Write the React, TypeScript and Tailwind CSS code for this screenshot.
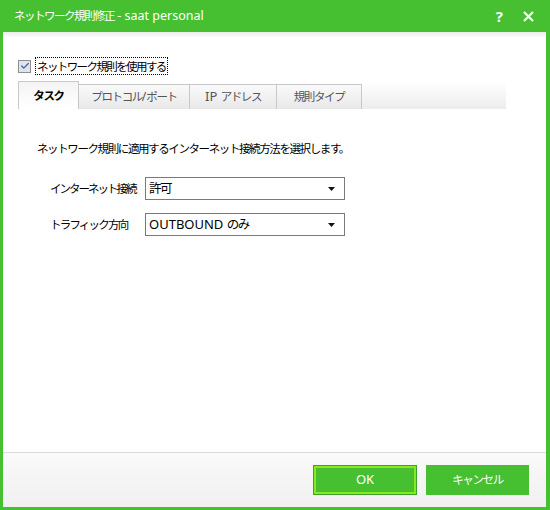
import { Check } from 'lucide-react'

const font = { fontFamily: '"Noto Sans", "Noto Sans CJK JP", sans-serif' }

// Japanese runs are narrower in the original UI font, so tighten them
function J({ children, className = '' }: { children: React.ReactNode; className?: string }) {
  return <span className={`text-[11.5px] tracking-[-1.4px] ${className}`}>{children}</span>
}

function Select({ children }: { children: React.ReactNode }) {
  return (
    <div className="flex h-[23px] w-[200px] items-center justify-between border border-[#7a7a7a] bg-white pl-[3px] pr-[9px] text-[13px] text-black">
      <span className="whitespace-nowrap leading-none">{children}</span>
      <svg width="7" height="4" viewBox="0 0 7 4">
        <path d="M0 0h7L3.5 4z" fill="#111" />
      </svg>
    </div>
  )
}

export default function App() {
  return (
    <div
      className="flex h-[510px] w-[550px] flex-col bg-[#46c031] pb-[3px] pl-[3px] pr-[4px]"
      style={font}
    >
      {/* title bar */}
      <div className="flex h-[32px] items-center justify-between pl-[11px] pr-[12px] text-white">
        <span className="whitespace-nowrap text-[12.5px]">
          <J className="tracking-[-1.5px]">ネットワーク規則修正</J> - saat personal
        </span>
        <div className="flex items-center gap-[20px] text-[15px] font-bold">
          <span>?</span>
          <svg width="11" height="11" viewBox="0 0 11 11">
            <path d="M1 1l9 9M10 1l-9 9" stroke="#fff" strokeWidth="2.2" />
          </svg>
        </div>
      </div>

      {/* body */}
      <div className="flex flex-1 flex-col bg-white">
        <div className="flex-1 bg-gradient-to-b from-[#ececec] to-white to-[6px] pl-[15px] pr-[40px] pt-[25px]">
          <div className="flex items-center gap-[4px]">
            <div className="flex h-[13px] w-[13px] items-center justify-center border border-[#8e8f8f] bg-[#dfe3ee]">
              <Check size={10} strokeWidth={3} className="text-[#4a5f97]" />
            </div>
            <span className="border border-dotted border-black px-[1px] leading-[15px] text-black">
              <J className="tracking-[-1.6px]">ネットワーク規則を使用する</J>
            </span>
          </div>

          <div className="mt-[7px] flex h-[27px] items-end bg-gradient-to-b from-white to-[#ececec]">
            <div className="flex h-[28px] w-[61px] items-center justify-center border border-b-0 border-[#c8c8c8] bg-gradient-to-b from-[#f4f4f4] to-white font-bold text-black">
              <J>タスク</J>
            </div>
            <div className="flex h-[25px] w-[111px] items-center justify-center border border-b-0 border-l-0 border-[#c8c8c8] bg-gradient-to-b from-[#fafafa] to-[#e8e8e8] text-[12px] text-[#555]">
              <J>プロトコル</J>/<J>ポート</J>
            </div>
            <div className="flex h-[25px] w-[87px] items-center justify-center border border-b-0 border-l-0 border-[#c8c8c8] bg-gradient-to-b from-[#fafafa] to-[#e8e8e8] text-[13px] text-[#555]">
              IP&nbsp;<J>アドレス</J>
            </div>
            <div className="flex h-[25px] w-[85px] items-center justify-center border border-b-0 border-l-0 border-[#c8c8c8] bg-gradient-to-b from-[#fafafa] to-[#e8e8e8] text-[#555]">
              <J>規則タイプ</J>
            </div>
          </div>

          <div className="pl-[19px] pt-[30px] text-black">
            <p className="leading-[16px]">
              <J>ネットワーク規則に適用するインターネット接続方法を選択します。</J>
            </p>
            <div className="mt-[20px] grid grid-cols-[95px_auto] items-center gap-y-[13px] pl-[13px]">
              <J className="whitespace-nowrap tracking-[-2px]">インターネット接続</J>
              <Select>
                <J className="text-[12.5px]">許可</J>
              </Select>
              <J className="whitespace-nowrap tracking-[-1.8px]">トラフィック方向</J>
              <Select>
                OUTBOUND <J className="text-[12.5px]">のみ</J>
              </Select>
            </div>
          </div>
        </div>

        {/* footer */}
        <div className="flex h-[55px] items-center justify-end gap-[10px] border-t border-[#dcdcdc] bg-gradient-to-b from-[#fafafa] to-[#f0f0f0] pr-[17px]">
          <button className="flex h-[28px] w-[102px] items-center justify-center border-2 border-[#86e81f] bg-[#46c031] text-[13px] text-white outline outline-1 outline-[#3ba22a]">
            OK
          </button>
          <button className="flex h-[30px] w-[103px] items-center justify-center bg-[#46c031] text-white">
            <J>キャンセル</J>
          </button>
        </div>
      </div>
    </div>
  )
}
